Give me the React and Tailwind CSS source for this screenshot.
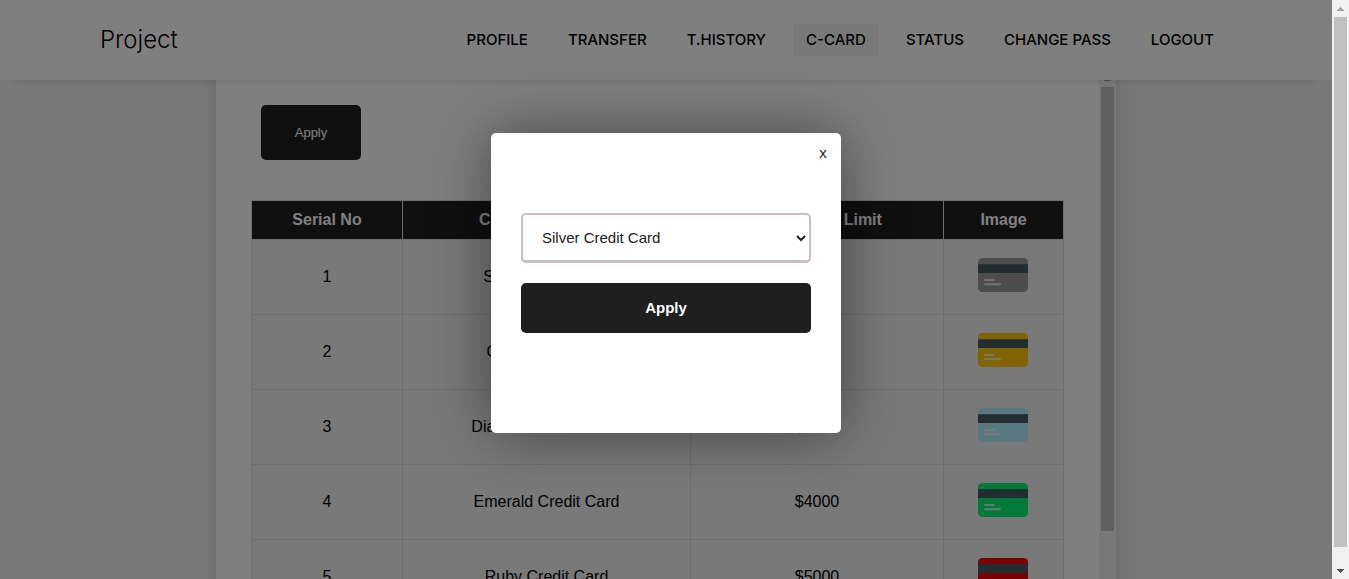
import { useState } from "react";

const links = ["Profile", "Transfer", "T.History", "C-Card", "Status", "Change Pass", "Logout"];

const cards = [
  { name: "Silver", limit: "$1000", color: "#9b9b9b" },
  { name: "Gold", limit: "$2000", color: "#ffc800" },
  { name: "Diamond", limit: "$3000", color: "#b4f0ff" },
  { name: "Emerald", limit: "$4000", color: "#00f474" },
  { name: "Ruby", limit: "$5000", color: "#f00000" },
];

function CardIcon({ color }) {
  return (
    <svg width="50" height="34" viewBox="0 0 50 34" className="mx-auto block" aria-hidden="true">
      <rect width="50" height="34" rx="4.5" fill={color} />
      <rect y="6.2" width="50" height="8.8" fill="#455a64" />
      <path d="M7 22H16M7 26.2H22.2" stroke="#fafafa" strokeOpacity=".8" strokeWidth="1.9" strokeLinecap="round" />
    </svg>
  );
}

function Arrow({ down, color }) {
  return (
    <svg width="17" height="17" viewBox="0 0 17 17" className="shrink-0" aria-hidden="true" shapeRendering="crispEdges">
      <path d={down ? "M5 7H12L8.500 11Z" : "M5 11H12L8.500 7Z"} fill={color} />
    </svg>
  );
}

function Scrollbar({ thumb }) {
  return (
    <div className="flex w-[17px] shrink-0 flex-col bg-[#f1f1f1]" aria-hidden="true">
      <Arrow color="#a3a3a3" />
      <div className="flex-1">
        <div className={`mx-[2px] bg-[#c1c1c1] ${thumb}`} />
      </div>
      <Arrow down color="#505050" />
    </div>
  );
}

export default function App() {
  const [open, setOpen] = useState(true);

  return (
    <div className="flex h-screen overflow-hidden bg-[#f2f2f2] font-['Liberation_Sans',Arial,sans-serif] text-black">
      <div className="relative flex min-w-0 flex-1 flex-col overflow-hidden">
        <header className="relative z-10 flex h-20 shrink-0 items-center justify-between bg-white pr-[105px] pl-[100px] font-['Inter',sans-serif] shadow-[0_15px_10px_-15px_rgba(0,0,0,0.15)]">
          <a href="#home" className="text-2xl font-light">Project</a>
          <nav className="flex gap-[14px]">
            {links.map((link) => (
              <a
                key={link}
                href={`#${link}`}
                className={`rounded-[3px] px-[13px] text-[15px] leading-8 font-medium whitespace-nowrap uppercase ${link === "C-Card" ? "bg-[#f2f2f2]" : ""}`}
              >
                {link}
              </a>
            ))}
          </nav>
        </header>

        <main className="mx-auto -mt-[10px] flex min-h-full w-full max-w-[900px] shrink-0 bg-white shadow-[0_0_20px_rgba(0,0,0,0.15)]">
          <div className="min-w-0 flex-1 px-[35px] pt-[35px]">
            <button
              type="button"
              onClick={() => setOpen(true)}
              className="ml-[10px] block h-[55px] w-[100px] rounded-[5px] bg-[#1f1f1f] text-[13px] text-white"
            >
              Apply
            </button>
            <table className="mt-10 w-full table-fixed border-collapse bg-[#f2f2f2] text-center text-base">
              <colgroup>
                <col className="w-[151px]" />
                <col />
                <col className="w-[253px]" />
                <col className="w-[120px]" />
              </colgroup>
              <thead>
                <tr className="h-[39px] bg-[#1f1f1f] text-white">
                  {["Serial No", "Credit Card Name", "Credit Card Limit", "Image"].map((title) => (
                    <th key={title} className="border border-[#dddddd] font-bold">{title}</th>
                  ))}
                </tr>
              </thead>
              <tbody>
                {cards.map((card, i) => (
                  <tr key={card.name} className="h-[75px]">
                    <td className="border border-[#dddddd]">{i + 1}</td>
                    <td className="border border-[#dddddd]">{card.name} Credit Card</td>
                    <td className="border border-[#dddddd]">{card.limit}</td>
                    <td className="border border-[#dddddd] pr-[2px] pb-[5px]"><CardIcon color={card.color} /></td>
                  </tr>
                ))}
              </tbody>
            </table>
          </div>
          <Scrollbar thumb="h-[444px]" />
        </main>

        {open && (
          <div className="absolute inset-0 z-20 flex items-center justify-center bg-black/50 pb-[13px]">
            <div
              role="dialog"
              aria-label="Apply for a credit card"
              className="flex h-[300px] w-[350px] flex-col rounded-[5px] bg-white px-[30px] pt-[10px] shadow-[0_0_60px_rgba(0,0,0,0.45)]"
            >
              <button
                type="button"
                aria-label="Close"
                onClick={() => setOpen(false)}
                className="-mr-[18px] h-[20px] w-[12px] self-end text-center text-[15px] leading-[20px] text-[#222222]"
              >
                x
              </button>
              <form className="mt-[50px] flex flex-col gap-5" onSubmit={(e) => e.preventDefault()}>
                <select
                  aria-label="Credit card"
                  className="h-[50px] w-full rounded-[5px] border-2 border-b-3 border-[#c8bfbf] bg-white pl-[15px] text-[15px] text-[#222222]"
                >
                  {cards.map((card) => (
                    <option key={card.name}>{card.name} Credit Card</option>
                  ))}
                </select>
                <button type="submit" className="h-[50px] w-full rounded-[5px] bg-[#1f1f1f] text-[15px] font-bold text-white">
                  Apply
                </button>
              </form>
            </div>
          </div>
        )}
      </div>
      <Scrollbar thumb="h-[calc(100%-15px)]" />
    </div>
  );
}
